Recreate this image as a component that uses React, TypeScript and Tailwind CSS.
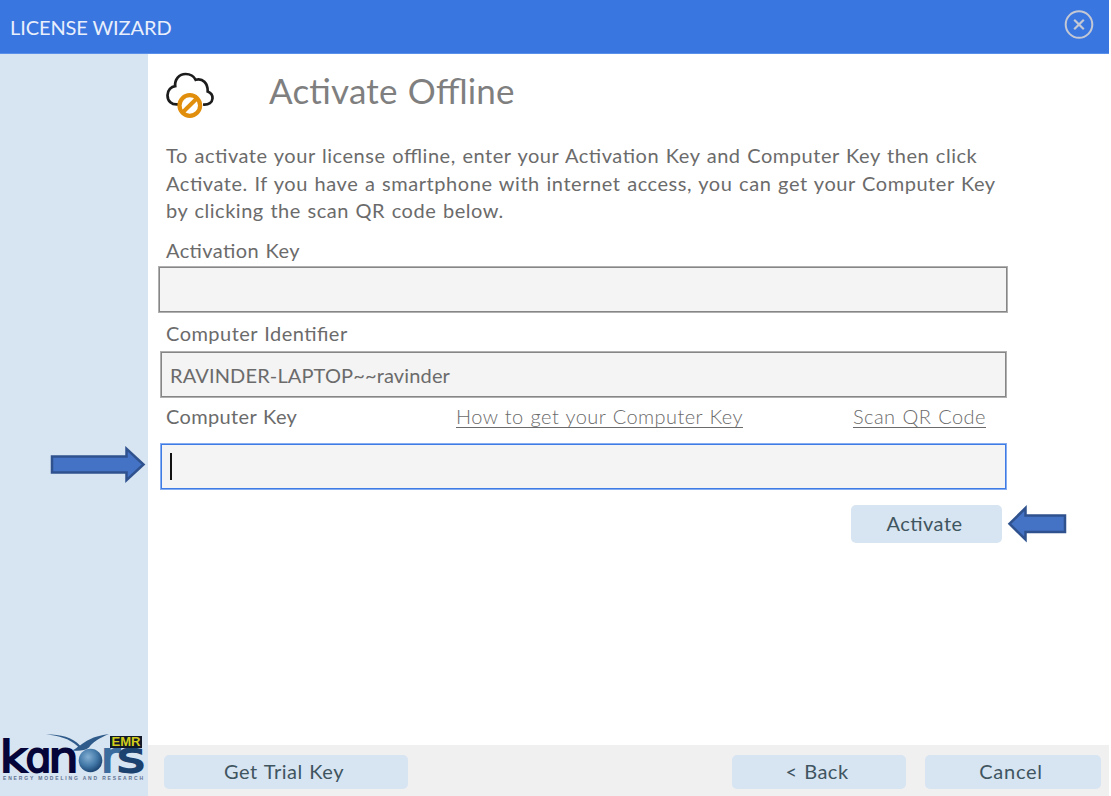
import React from 'react';

const base = "[font-family:Lato,sans-serif] [font-feature-settings:'liga'_1] whitespace-nowrap";

function WizardButton({ label, className }: { label: string; className: string }) {
  return (
    <button className={`rounded-[5px] bg-[#d7e4f2] pb-[1px] pr-[4px] text-center text-[20px] leading-[33px] text-[#3f5560] [word-spacing:1px] ${className}`}>
      {label}
    </button>
  );
}

function CloudBlockedIcon() {
  return (
    <svg className="block shrink-0" width="50" height="50" viewBox="0 0 50 50" fill="none">
      <path
        d="M13 34.4C6.500 35 2.500 31 2.500 25.200C2.500 20 6.300 16.600 10.200 16.100C9.500 9.500 14 4 20.600 4C25.400 4 29 6.500 30.700 9.800C37.500 7.900 43 12.800 42.700 21.500C46 22.800 47.700 25.500 47.500 28.500C47.200 32.300 44 35 38 34.500"
        stroke="#1c1c1c"
        strokeWidth="2.7"
      />
      <circle cx="24.800" cy="35.500" r="10.300" stroke="#e08e0b" strokeWidth="4.200" fill="#fff" />
      <path d="M18.300 41.800L31 29.300" stroke="#e08e0b" strokeWidth="4" />
    </svg>
  );
}

function KanorsLogo() {
  return (
    <svg className="block" width="148" height="62" viewBox="0 0 148 62">
      <defs>
        <radialGradient id="globe" cx="40%" cy="35%" r="70%">
          <stop offset="0" stopColor="#84afd3" />
          <stop offset="0.55" stopColor="#4379a8" />
          <stop offset="1" stopColor="#163d6b" />
        </radialGradient>
      </defs>
      <g fontFamily="DejaVu Sans, sans-serif" fontSize="42" fill="#05053a" stroke="#05053a" strokeWidth="1.900">
        <text x="0" y="37.500" textLength="27" lengthAdjust="spacingAndGlyphs">k</text>
        <text x="25.500" y="37.500" textLength="26" lengthAdjust="spacingAndGlyphs">ɑ</text>
        <text x="48.500" y="37.500" textLength="30" lengthAdjust="spacingAndGlyphs">n</text>
      </g>
      <g fontFamily="DejaVu Sans, sans-serif" fontSize="42" strokeWidth="1.900">
        <text x="101" y="37.500" textLength="19" lengthAdjust="spacingAndGlyphs" fill="#3c6c9d" stroke="#3c6c9d">r</text>
        <text x="117" y="37.500" textLength="28" lengthAdjust="spacingAndGlyphs" fill="#1c426f" stroke="#1c426f">s</text>
      </g>
      <circle cx="90.500" cy="26.500" r="11.800" fill="url(#globe)" />
      <path d="M46 .5C61 .5 72 3 80 11.500C85 8 92 2 109 0C99 4 92 9 89 13.500C85 17 79 17 72 16.500C75 15 77 14 78 12.500C68 4 60 2 46 .5Z" fill="#2f5b8a" />
      <rect x="110" y="2" width="32" height="12" fill="#111827" />
      <text x="111.500" y="12.300" textLength="29" fontFamily="Liberation Sans, sans-serif" fontSize="12" fontWeight="700" lengthAdjust="spacingAndGlyphs" fill="#d2cd1c">EMR</text>
      <text x="3" y="45.500" textLength="140" fontFamily="Liberation Sans, sans-serif" fontSize="5" fontWeight="700" fill="#5f7292">ENERGY MODELING AND RESEARCH</text>
    </svg>
  );
}

export default function App() {
  return (
    <div className={`h-[796px] w-[1111px] overflow-hidden bg-white pr-[2px] text-[#6b6b6b] ${base}`}>
      <div className="flex h-full flex-col">
        <header className="flex h-[54px] shrink-0 items-center justify-between border-b border-[#5b90ea] bg-[#3a76e0] pl-[10px] pr-[15px]">
          <h1 className="text-[20px] leading-[24px] tracking-[-0.1px] text-[#e9effb]">LICENSE WIZARD</h1>
          <svg className="-mt-[4px]" width="30" height="30" viewBox="0 0 30 30" fill="none" stroke="#c3c8d4">
            <circle cx="15" cy="14.500" r="13.300" strokeWidth="2" />
            <path d="M10.200 9.700L19.800 19.300M19.800 9.700L10.200 19.300" strokeWidth="2.200" />
          </svg>
        </header>

        <div className="flex min-h-0 grow">
          <aside className="flex w-[148px] shrink-0 flex-col justify-between bg-[#d7e4f1] pt-[392px]">
            <svg className="ml-[49px] block shrink-0" width="97" height="38" viewBox="0 0 97 38">
              <path d="M3 10.500H77.500V2.800L94.500 18.500L77.500 34.200V26.500H3Z" fill="#4472c4" stroke="#2f528f" strokeWidth="2.500" />
            </svg>
            <div className="h-[62px]">
              <KanorsLogo />
            </div>
          </aside>

          <div className="flex grow flex-col">
            <main className="grow">
              <div className="flex pl-[17px] pt-[16px]">
                <CloudBlockedIcon />
                <h2 className="ml-[54px] mt-[-2px] text-[35px] leading-[44px] tracking-[0.2px] text-[#7f7f7f] [word-spacing:1px]">Activate Offline</h2>
              </div>

              <div className="mt-[22px] pl-[18px] text-[20px] leading-[27.7px] [word-spacing:1px]">
                <p className="tracking-[0.54px]">To activate your license offline, enter your Activation Key and Computer Key then click</p>
                <p className="tracking-[0.55px]">Activate. If you have a smartphone with internet access, you can get your Computer Key</p>
                <p className="tracking-[0.52px]">by clicking the scan QR code below.</p>
              </div>

              <div className="mt-[13px] pl-[18px] text-[20px] leading-[24px] tracking-[0.4px] [word-spacing:1px]">Activation Key</div>
              <div className="ml-[10px] mt-[4px] h-[47px] w-[850px] border border-[#b0b0b0] bg-[#f4f4f4] shadow-[inset_0_0_0_1px_#868686]" />

              <div className="mt-[8px] pl-[18px] text-[20px] leading-[24px] tracking-[0.47px] [word-spacing:1px]">Computer Identifier</div>
              <div className="ml-[12px] mt-[6px] flex h-[47px] w-[847px] items-center border border-[#b0b0b0] bg-[#f4f4f4] pl-[9px] text-[20px] leading-[24px] tracking-[0.14px] shadow-[inset_0_0_0_1px_#868686]">
                RAVINDER-LAPTOP~~ravinder
              </div>

              <div className="mt-[6px] flex pl-[18px] text-[20px] leading-[24px] [word-spacing:1px]">
                <span className="w-[290px] tracking-[0.35px]">Computer Key</span>
                <div className="w-[397px]">
                  <a className="inline-block h-[24px] border-b border-[#6b6b6b] font-light tracking-[0.43px]">How to get your Computer Key</a>
                </div>
                <a className="inline-block h-[24px] border-b border-[#6b6b6b] font-light tracking-[0.45px]">Scan QR Code</a>
              </div>
              <div className="ml-[12px] mt-[15px] flex h-[47px] w-[847px] items-center border border-[#86adf0] bg-[#f4f4f4] pl-[9px] shadow-[inset_0_0_0_1px_#3f7be4]">
                <span className="h-[27px] w-[2px] bg-[#111]" />
              </div>

              <div className="mt-[15px] flex items-center pl-[703px]">
                <WizardButton label="Activate" className="h-[38px] w-[151px] tracking-[0.5px]" />
                <svg className="ml-[5px] block" width="60" height="38" viewBox="0 0 60 38">
                  <path d="M58 10.500H18.500V3L2.500 18.800L18.500 34.500V27H58Z" fill="#4472c4" stroke="#2f528f" strokeWidth="2.500" />
                </svg>
              </div>
            </main>

            <footer className="flex h-[51px] shrink-0 bg-[#f0f0f0] pl-[16px] pt-[10px]">
              <WizardButton label="Get Trial Key" className="h-[34px] w-[244px] tracking-[0.52px]" />
              <WizardButton label="< Back" className="ml-[324px] h-[34px] w-[174px] tracking-[0.5px]" />
              <WizardButton label="Cancel" className="ml-[19px] h-[34px] w-[176px] tracking-[0.75px]" />
            </footer>
          </div>
        </div>
      </div>
    </div>
  );
}
